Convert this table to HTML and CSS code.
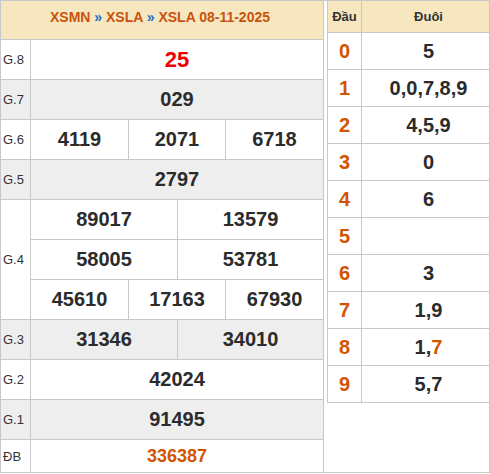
FILE: index.html
```html
<!DOCTYPE html>
<html>
<head>
<meta charset="utf-8">
<link rel="stylesheet" href="styles.css">
</head>
<body>
<div class="wrap">
  <div class="kq">
    <div class="hd">XSMN <span class="sep">»</span> XSLA <span class="sep">»</span> XSLA 08-11-2025</div>

    <div class="lb">G.8</div>
    <div class="c span5 g8">25</div>

    <div class="lb alt">G.7</div>
    <div class="c span5 alt">029</div>

    <div class="lb">G.6</div>
    <div class="c s3a">4119</div>
    <div class="c s3b">2071</div>
    <div class="c s3c">6718</div>

    <div class="lb alt">G.5</div>
    <div class="c span5 alt">2797</div>

    <div class="lb g4">G.4</div>
    <div class="c s2a">89017</div>
    <div class="c s2b">13579</div>
    <div class="c s2a">58005</div>
    <div class="c s2b">53781</div>
    <div class="c s3a">45610</div>
    <div class="c s3b">17163</div>
    <div class="c s3c">67930</div>

    <div class="lb alt">G.3</div>
    <div class="c s2a alt">31346</div>
    <div class="c s2b alt">34010</div>

    <div class="lb">G.2</div>
    <div class="c span5">42024</div>

    <div class="lb alt">G.1</div>
    <div class="c span5 alt">91495</div>

    <div class="lb">ĐB</div>
    <div class="c span5 db">336387</div>
  </div>

  <div class="side">
    <div class="lt">
      <div class="th">Đầu</div><div class="th tail">Đuôi</div>
      <div class="h">0</div><div class="t">5</div>
      <div class="h">1</div><div class="t">0,0,7,8,9</div>
      <div class="h">2</div><div class="t">4,5,9</div>
      <div class="h">3</div><div class="t">0</div>
      <div class="h">4</div><div class="t">6</div>
      <div class="h">5</div><div class="t"></div>
      <div class="h">6</div><div class="t">3</div>
      <div class="h">7</div><div class="t">1,9</div>
      <div class="h">8</div><div class="t">1,<span class="hl">7</span></div>
      <div class="h">9</div><div class="t">5,7</div>
    </div>
  </div>
</div>
</body>
</html>
```

FILE: styles.css
```css
html, body {
  margin: 0;
  padding: 0;
  background: #fff;
}

body {
  font-family: "Liberation Sans", Arial, sans-serif;
  color: #2b2b2b;
}

.wrap {
  display: flex;
  width: 490px;
  height: 473px;
  box-sizing: border-box;
  border: 1px solid #c8c8c8;
}

.kq {
  display: grid;
  grid-template-columns: 29px 97px 48px 47px 97px;
  grid-template-rows: 38px repeat(10, 39px) 32px;
  gap: 1px;
  background: #c8c8c8;
  border-right: 1px solid #c8c8c8;
  width: 322px;
  height: 471px;
}

.kq > div {
  background: #fff;
  display: flex;
  align-items: center;
  justify-content: center;
}

.kq > .alt {
  background: #eeeeee;
}

.hd {
  grid-column: 1 / 6;
  background: #f6e7c0 !important;
  color: #c9530c;
  font-weight: bold;
  font-size: 14px;
  padding-bottom: 6px;
  padding-right: 4px;
  box-sizing: border-box;
  white-space: pre;
}

.sep {
  color: #1f6fc5;
}

.kq > .lb {
  justify-content: flex-start;
  padding-left: 2px;
  font-size: 13px;
  color: #333;
}

.g4 {
  grid-row: span 3;
}

.c {
  font-size: 20px;
  font-weight: bold;
}

.span5 { grid-column: 2 / 6; }
.s3a { grid-column: 2 / 3; }
.s3b { grid-column: 3 / 5; }
.s3c { grid-column: 5 / 6; }
.s2a { grid-column: 2 / 4; }
.s2b { grid-column: 4 / 6; }

.g8 {
  color: #ee0000;
  font-size: 22px;
}

.db {
  color: #d35400;
  font-size: 18px;
}

.side {
  flex: 1;
  padding-left: 3px;
}

.lt {
  display: grid;
  grid-template-columns: 33px 127px;
  grid-template-rows: 31px repeat(10, 36px);
  gap: 1px;
  background: #c8c8c8;
  border-left: 1px solid #c8c8c8;
  border-bottom: 1px solid #c8c8c8;
}

.lt > div {
  background: #fff;
  display: flex;
  align-items: center;
  justify-content: center;
  font-weight: bold;
}

.lt > .th {
  background: #f6e7c0;
  font-size: 13px;
  color: #333;
}

.lt > .tail,
.lt > .t {
  padding-left: 6px;
}

.lt > .h {
  color: #d35400;
  font-size: 20px;
}

.lt > .t {
  font-size: 20px;
  color: #2b2b2b;
}

.hl {
  color: #d35400;
}
```
